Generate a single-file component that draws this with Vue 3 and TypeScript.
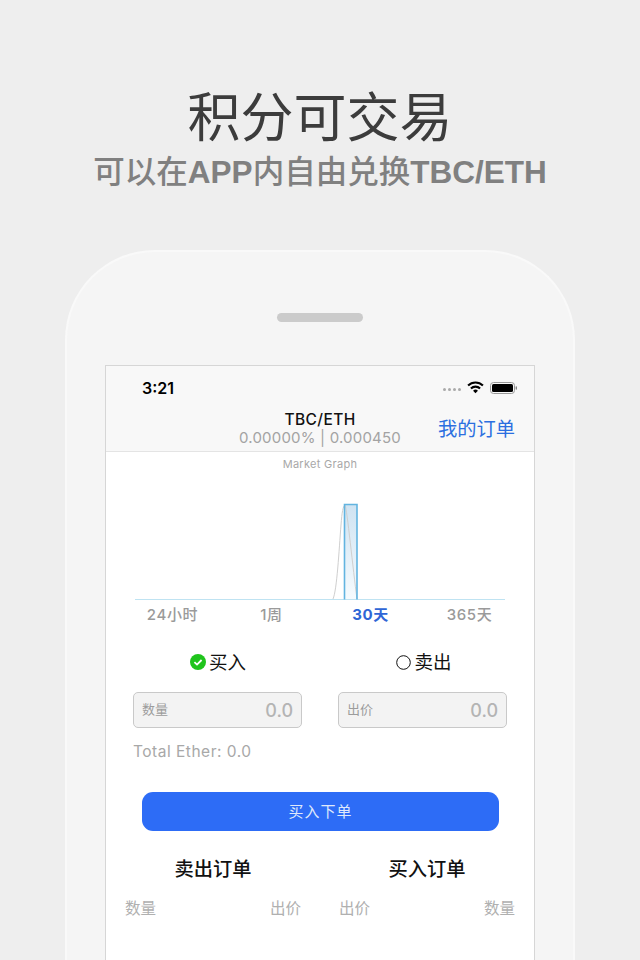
<script setup lang="ts">
const ranges = [
  { label: '24小时', active: false },
  { label: '1周', active: false },
  { label: '30天', active: true },
  { label: '365天', active: false },
];
const fields = [
  { label: '数量', value: '0.0' },
  { label: '出价', value: '0.0' },
];
</script>

<template>
  <div class="page">
    <h1 class="title">积分可交易</h1>
    <p class="subtitle">可以在<b>APP</b>内自由兑换<b>TBC/ETH</b></p>

    <div class="phone">
      <div class="speaker" />
      <div class="screen">
        <div class="head">
          <div class="status">
            <span class="time">3:21</span>
            <div class="status-icons">
              <span class="dots"><i /><i /><i /><i /></span>
              <svg width="17" height="13" viewBox="0 0 16 12">
                <path d="M1 4.2a10 10 0 0 1 14 0" fill="none" stroke="#000" stroke-width="2" />
                <path d="M3.7 6.9a6.2 6.2 0 0 1 8.6 0" fill="none" stroke="#000" stroke-width="2" />
                <path d="M8 11.5 5.7 9.1a3.2 3.2 0 0 1 4.6 0z" fill="#000" />
              </svg>
              <svg width="28" height="12" viewBox="0 0 28 12">
                <rect x=".5" y=".5" width="24" height="11" rx="3" fill="none" stroke="#999" />
                <rect x="2" y="2" width="21" height="8" rx="1.5" fill="#000" />
                <rect x="25.6" y="4.3" width="1.4" height="3.4" rx=".7" fill="#888" />
              </svg>
            </div>
          </div>
          <div class="nav">
            <div class="pair">
              <div class="pair-name">TBC/ETH</div>
              <div class="pair-rate">0.00000% | 0.000450</div>
            </div>
            <span class="orders-link">我的订单</span>
          </div>
        </div>

        <div class="graph-title">Market Graph</div>
        <svg class="graph" width="370" height="101" viewBox="0 0 370 101">
          <defs>
            <linearGradient id="bar-fill" x1="0" y1="0" x2="0" y2="1">
              <stop offset="0" stop-color="#cfe3f2" />
              <stop offset="1" stop-color="#f6fbfe" />
            </linearGradient>
          </defs>
          <path d="M209.5 4.5H222V99.5H209.5z" fill="url(#bar-fill)" />
          <path d="M198 99C202 90 204 50 206 25C207 12 208 6 210 5C212 8 218 70 222 99" fill="none" stroke="#cfcfcf" />
          <path d="M0 99.5H370" fill="none" stroke="#bfe3f2" />
          <path d="M209.5 99.5V4.5H222V99.5" fill="none" stroke="#62b4e0" stroke-width="1.6" />
        </svg>
        <div class="ranges">
          <span v-for="r in ranges" :key="r.label" class="range" :class="{ active: r.active }">{{ r.label }}</span>
        </div>

        <div class="sides">
          <div class="side">
            <svg width="16" height="16" viewBox="0 0 16 16">
              <circle cx="8" cy="8" r="8" fill="#1fc41c" />
              <path d="M4.4 8.2 7 10.6 11.6 6" fill="none" stroke="#fff" stroke-width="1.8" />
            </svg>
            <span>买入</span>
          </div>
          <div class="side">
            <svg width="15" height="15" viewBox="0 0 15 15">
              <circle cx="7.5" cy="7.5" r="6.8" fill="none" stroke="#111" stroke-width="1" />
            </svg>
            <span>卖出</span>
          </div>
        </div>

        <div class="fields">
          <div v-for="f in fields" :key="f.label" class="field">
            <span class="field-label">{{ f.label }}</span>
            <span class="field-value">{{ f.value }}</span>
          </div>
        </div>
        <div class="total">Total Ether: 0.0</div>

        <button class="submit">买入下单</button>

        <div class="books">
          <div class="book">
            <div class="book-title">卖出订单</div>
            <div class="book-cols"><span>数量</span><span>出价</span></div>
          </div>
          <div class="book">
            <div class="book-title">买入订单</div>
            <div class="book-cols"><span>出价</span><span>数量</span></div>
          </div>
        </div>
      </div>
    </div>
  </div>
</template>

<style>
html, body { margin: 0; background: #eeeeee; }
</style>

<style scoped>
.page {
  height: 960px;
  overflow: hidden;
  background: #eeeeee;
  font-family: "Inter", "Noto Sans CJK SC", sans-serif;
  display: flex;
  flex-direction: column;
  align-items: center;
}
.title {
  margin: 75px 0 1px;
  font-size: 53px;
  line-height: 78px;
  font-weight: 400;
  color: #3c3c3c;
  font-family: "Noto Sans CJK SC", sans-serif;
}
.subtitle {
  margin: 0;
  font-size: 31.5px;
  line-height: 36px;
  font-weight: 500;
  color: #808080;
  font-family: "Liberation Sans", "Noto Sans CJK SC", sans-serif;
}
.subtitle b {
  font-weight: 700;
}
.phone {
  margin-top: 60px;
  width: 506px;
  height: 720px;
  flex: none;
  border: 2px solid #f9f9f9;
  border-bottom: 0;
  border-radius: 90px 90px 0 0;
  background: #f5f5f5;
  display: flex;
  flex-direction: column;
  align-items: center;
}
.speaker {
  margin-top: 61px;
  width: 86px;
  height: 9px;
  border-radius: 5px;
  background: #cbcbcb;
}
.screen {
  margin-top: 43px;
  width: 428px;
  flex: 1;
  border: 1px solid #d6d6d6;
  border-bottom: 0;
  background: #fff;
  display: flex;
  flex-direction: column;
}
.head {
  height: 85px;
  flex: none;
  background: #f8f8f8;
  border-bottom: 1px solid #e4e4e4;
}
.status {
  display: flex;
  justify-content: space-between;
  align-items: center;
  padding: 12px 16px 0 36px;
  height: 19px;
}
.time {
  font-size: 16px;
  font-weight: 600;
  color: #000;
}
.status-icons {
  display: flex;
  align-items: center;
  gap: 6px;
}
.dots {
  display: flex;
  gap: 2px;
  margin-top: 4px;
}
.dots i {
  width: 3px;
  height: 3px;
  border-radius: 50%;
  background: #aaa;
}
.nav {
  position: relative;
  margin-top: 14px;
  display: flex;
  justify-content: center;
}
.pair {
  text-align: center;
}
.pair-name {
  font-size: 15.5px;
  line-height: 18px;
  font-weight: 500;
  letter-spacing: .4px;
  color: #111;
}
.pair-rate {
  font-size: 15px;
  line-height: 18px;
  letter-spacing: .2px;
  color: #a3a3a3;
}
.orders-link {
  position: absolute;
  right: 19px;
  top: 6px;
  font-size: 19.25px;
  line-height: 24px;
  color: #2b6fe0;
}
.graph-title {
  margin-top: 6px;
  text-align: center;
  font-size: 11px;
  line-height: 13px;
  letter-spacing: .3px;
  color: #a8a8a8;
}
.graph {
  display: block;
  margin: 29px 0 0 29px;
  flex: none;
}
.ranges {
  display: grid;
  grid-template-columns: 99px 99px 99px 99px;
  padding-left: 17px;
  margin-top: 4px;
}
.range {
  text-align: center;
  font-size: 15px;
  line-height: 20px;
  font-weight: 500;
  letter-spacing: .6px;
  color: #9a9a9a;
}
.range.active {
  color: #2f66d6;
  font-weight: 700;
}
.sides {
  margin-top: 25px;
  display: grid;
  grid-template-columns: 206px 206px;
  padding-left: 9px;
}
.side {
  display: flex;
  justify-content: center;
  align-items: center;
  gap: 3px;
  font-size: 18.5px;
  line-height: 24px;
  color: #111;
}
.fields {
  margin-top: 18px;
  padding-left: 27px;
  display: flex;
  gap: 36px;
}
.field {
  box-sizing: border-box;
  width: 169px;
  height: 36px;
  border: 1px solid #c9c9c9;
  border-radius: 5px;
  background: #f3f3f3;
  padding: 0 8px;
  display: flex;
  justify-content: space-between;
  align-items: center;
}
.field-label {
  font-size: 13px;
  padding-bottom: 3px;
  color: #9c9c9c;
}
.field-value {
  font-size: 18px;
  font-weight: 500;
  color: #b4b4b4;
}
.total {
  margin: 14px 0 0 27px;
  font-size: 15.5px;
  line-height: 20px;
  letter-spacing: .5px;
  color: #a8a8a8;
}
.submit {
  margin: 30px 0 0 36px;
  width: 357px;
  height: 39px;
  flex: none;
  border: 0;
  border-radius: 11px;
  background: #2d6cf6;
  color: #dfe8fb;
  font-family: inherit;
  font-size: 15px;
  letter-spacing: 1px;
  padding: 0 0 3px;
}
.books {
  margin-top: 25px;
  padding: 0 19px;
  display: flex;
  gap: 38px;
}
.book {
  width: 177px;
}
.book-title {
  text-align: center;
  font-size: 19.25px;
  line-height: 26px;
  font-weight: 500;
  color: #111;
}
.book-cols {
  margin-top: 16px;
  display: flex;
  justify-content: space-between;
  font-size: 15.5px;
  line-height: 22px;
  color: #b0b0b0;
}
</style>
